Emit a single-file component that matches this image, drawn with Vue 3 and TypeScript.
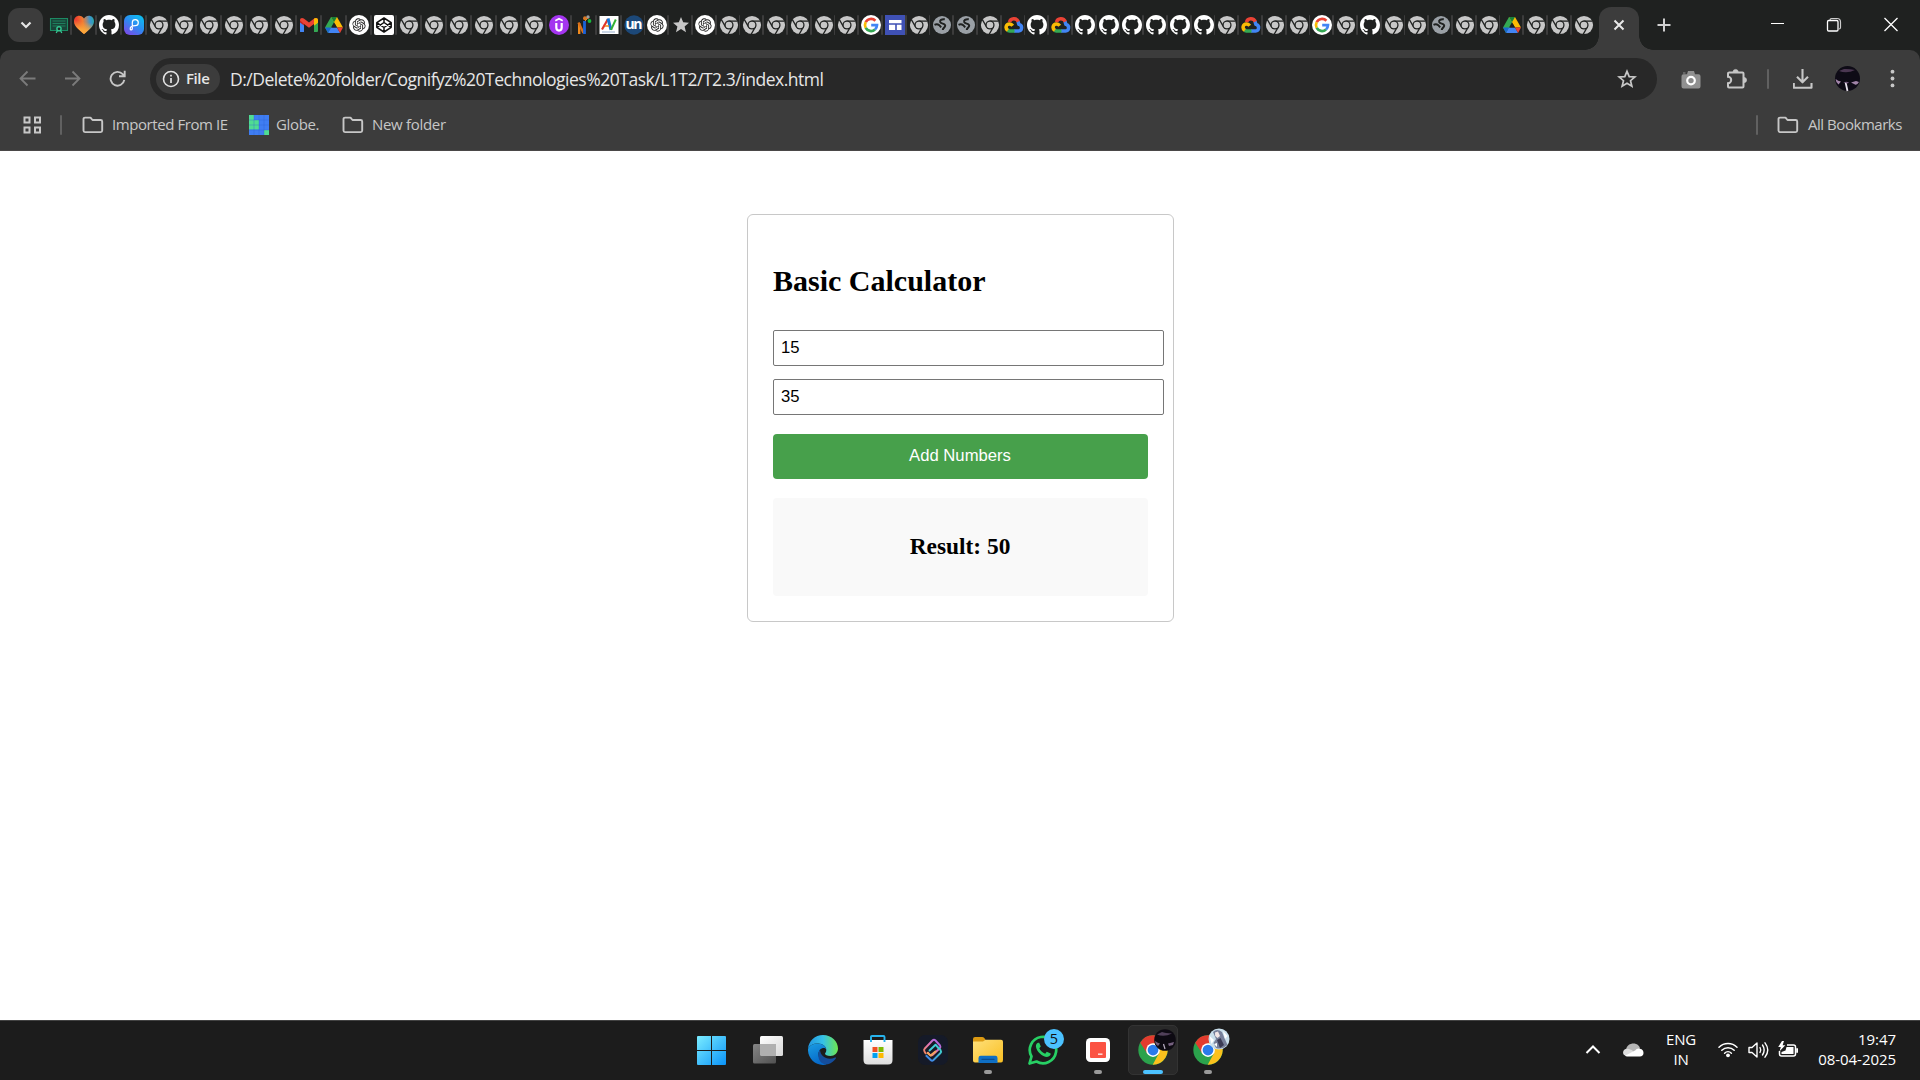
<script setup lang="ts">
import { computed, ref } from 'vue'

const favicons: string[] = [
  'cert', 'heart', 'github', 'play',
  ...Array(6).fill('chrome'),
  'gmail', 'drive', 'openai', 'codepen',
  ...Array(6).fill('chrome'),
  'udemy', 'nest', 'av', 'un', 'openai', 'star', 'openai',
  ...Array(6).fill('chrome'),
  'google', 'sites', 'chrome', 'globe', 'globe', 'chrome', 'gcloud', 'github', 'gcloud',
  ...Array(6).fill('github'),
  'chrome', 'gcloud', 'chrome', 'chrome', 'google', 'chrome', 'github', 'chrome', 'chrome', 'globe',
  'chrome', 'chrome', 'drive', 'chrome', 'chrome', 'chrome',
]

// Tabs shrink unevenly: the first 23 keep 25px, the rest share 23.75px on whole pixels.
const offset = (i: number): number => (i <= 23 ? i * 25 : 575 + Math.floor((i - 23) * 23.75))
const tabs = favicons.map((icon, i) => ({ icon, width: offset(i + 1) - offset(i) }))

const first = ref('15')
const second = ref('35')
const result = ref<number>(50)
const add = (): void => {
  result.value = Number(first.value) + Number(second.value)
}
const resultText = computed(() => `Result: ${result.value}`)
</script>

<template>
  <div class="screen">
    <svg class="sprite" width="0" height="0" aria-hidden="true">
      <defs>
        <linearGradient id="g-heart" x1="0" y1="0.2" x2="1" y2="0.1"><stop offset="0.1" stop-color="#ee4030" /><stop offset="0.42" stop-color="#f47a30" /><stop offset="0.62" stop-color="#9a8a80" /><stop offset="0.8" stop-color="#3a96cf" /><stop offset="1" stop-color="#2aa8a0" /></linearGradient>
        <linearGradient id="g-heart2" x1="0.6" y1="0.1" x2="0.4" y2="1"><stop offset="0.25" stop-color="#fba63a" stop-opacity="0" /><stop offset="0.75" stop-color="#fba63a" /></linearGradient>
        <linearGradient id="g-play" x1="0.9" y1="0" x2="0.2" y2="1"><stop offset="0" stop-color="#08c4ee" /><stop offset="0.5" stop-color="#2c8cf2" /><stop offset="1" stop-color="#7a4be8" /></linearGradient>
        <linearGradient id="g-win" x1="0" y1="0" x2="1" y2="1"><stop offset="0" stop-color="#7bedff" /><stop offset="1" stop-color="#0a93f8" /></linearGradient>
        <linearGradient id="g-tv" x1="0" y1="0" x2="1" y2="1"><stop offset="0" stop-color="#fff" /><stop offset="1" stop-color="#d8d8d8" /></linearGradient>
        <linearGradient id="g-tv2" x1="0" y1="0" x2="1" y2="1"><stop offset="0" stop-color="#858585" /><stop offset="1" stop-color="#515151" /></linearGradient>
        <linearGradient id="g-edge1" x1="0" y1="0.3" x2="1" y2="0.3"><stop offset="0" stop-color="#2196e0" /><stop offset="0.5" stop-color="#35c1e8" /><stop offset="1" stop-color="#6ee84e" /></linearGradient>
        <linearGradient id="g-edge2" x1="0" y1="0" x2="0.4" y2="1"><stop offset="0" stop-color="#1b9de2" /><stop offset="1" stop-color="#0669c9" /></linearGradient>
        <linearGradient id="g-folder" x1="0" y1="0" x2="1" y2="1"><stop offset="0" stop-color="#ffe07a" /><stop offset="1" stop-color="#f9bf22" /></linearGradient>
        <linearGradient id="g-store" x1="0" y1="0" x2="0" y2="1"><stop offset="0" stop-color="#fff" /><stop offset="1" stop-color="#dedede" /></linearGradient>
        <linearGradient id="g-clip1" x1="0" y1="1" x2="1" y2="0"><stop offset="0" stop-color="#f08b52" /><stop offset="0.5" stop-color="#e275b8" /><stop offset="1" stop-color="#9a63f0" /></linearGradient>
        <linearGradient id="g-clip2" x1="0" y1="1" x2="1" y2="0"><stop offset="0" stop-color="#3f78ee" /><stop offset="1" stop-color="#3fdcc8" /></linearGradient>

        <symbol id="f-chrome" viewBox="0 0 20 20">
          <circle cx="10" cy="10" r="9.1" fill="#c7c7c7" />
          <circle cx="10" cy="10" r="4.6" fill="#1f2120" />
          <g stroke="#1f2120" stroke-width="1.3"><path d="M9.5 6.1H18.5" /><path d="M9.5 6.1H18.5" transform="rotate(120 10 10)" /><path d="M9.5 6.1H18.5" transform="rotate(240 10 10)" /></g>
          <circle cx="10" cy="10" r="3.3" fill="#c7c7c7" />
        </symbol>
        <symbol id="f-github" viewBox="0 0 16 16">
          <path fill="#fff" d="M8 0C3.58 0 0 3.58 0 8c0 3.54 2.29 6.53 5.47 7.59.4.07.55-.17.55-.38 0-.19-.01-.82-.01-1.49-2.01.37-2.53-.49-2.69-.94-.09-.23-.48-.94-.82-1.13-.28-.15-.68-.52-.01-.53.63-.01 1.08.58 1.23.82.72 1.21 1.87.87 2.33.66.07-.52.28-.87.51-1.07-1.78-.2-3.64-.89-3.64-3.95 0-.87.31-1.59.82-2.15-.08-.2-.36-1.02.08-2.12 0 0 .67-.21 2.2.82.64-.18 1.32-.27 2-.27s1.36.09 2 .27c1.53-1.04 2.2-.82 2.2-.82.44 1.1.16 1.92.08 2.12.51.56.82 1.27.82 2.15 0 3.07-1.87 3.75-3.65 3.95.29.25.54.73.54 1.48 0 1.07-.01 1.93-.01 2.2 0 .21.15.46.55.38A8.01 8.01 0 0 0 16 8c0-4.42-3.58-8-8-8z" />
        </symbol>
        <symbol id="f-cert" viewBox="0 0 20 20">
          <path d="M1.500 3.500H18.500V15.500H1.500z" fill="#194438" stroke="#1d8a63" stroke-width="1.100" />
          <path d="M3.500 6H16.500M3.500 8.500H16.500M3.500 11H16.500" stroke="#1f8f68" stroke-width=".8" />
          <path d="M8.500 15.500 7.200 18M11.500 15.500 12.800 18" stroke="#35c994" stroke-width="1.300" /><circle cx="10" cy="13.800" r="2.100" fill="#1f2120" stroke="#35c994" stroke-width="1.400" />
        </symbol>
        <symbol id="f-heart" viewBox="0 0 20 20">
          <path d="M10 19C6 15.500 0 11.500 0 6.200 0 3 2.400.8 5.200.8 7.200.8 9 1.900 10 3.600 11 1.900 12.800.8 14.800.8 17.600.8 20 3 20 6.200 20 11.500 14 15.500 10 19z" fill="url(#g-heart)" />
          <path d="M10 19C6 15.500 0 11.500 0 6.200 0 3 2.400.8 5.200.8 7.200.8 9 1.900 10 3.600 11 1.900 12.800.8 14.800.8 17.600.8 20 3 20 6.200 20 11.500 14 15.500 10 19z" fill="url(#g-heart2)" />
        </symbol>
        <symbol id="f-play" viewBox="0 0 20 20">
          <rect width="20" height="20" rx="6" fill="url(#g-play)" /><path d="M8.300 9.500V7.600A3 3 0 1 1 11.300 10.700C8 10.700 6 12 6.200 14 6.400 15.500 8.300 15.200 8.300 13.500V9" fill="none" stroke="#fff" stroke-width="1.200" stroke-linecap="round" />
        </symbol>
        <symbol id="f-gmail" viewBox="0 0 20 20">
          <path d="M1 16.800V5H5V17H2A1 1 0 0 1 1 16.800z" fill="#4285f4" /><path d="M15 17V5h4v11a1 1 0 0 1-1 1z" fill="#34a853" /><path d="M1 5 5 6.500V10.600L1 7.600z" fill="#c5221f" /><path d="M19 5 15 6.500V10.600L19 7.600z" fill="#fbbc04" /><path d="M1 5.200C1 3 3.200 2.300 4.800 3.600L10 7.500 15.200 3.600C16.800 2.300 19 3 19 5.200L15 9 10 12.800 5 9z" fill="#ea4335" /><path d="M15.200 3.600C16.800 2.300 19 3 19 5.200V7.600L15 10.600V3.700z" fill="#fbbc04" />
        </symbol>
        <symbol id="f-drive" viewBox="0 0 20 20">
          <path d="M7 2H10L12.500 6.300 4 18 1 12.500z" fill="#34a853" /><path d="M7 2H13L19 12.500H13z" fill="#fbbc04" /><path d="M7 2H13L10 7.200z" fill="#188038" /><path d="M7 12.500H13L16 18H4z" fill="#4285f4" /><path d="M1 12.500H7L4 18z" fill="#1967d2" /><path d="M13 12.500H19L16 18z" fill="#ea4335" /><path d="M10 7.200 13 12.500H7z" fill="#1f2120" />
        </symbol>
        <symbol id="f-openai" viewBox="0 0 20 20">
          <circle cx="10" cy="10" r="10" fill="#fff" />
          <path transform="translate(3.300 3.300) scale(.558)" fill="#222" d="M22.2819 9.8211a5.9847 5.9847 0 0 0-.5157-4.9108 6.0462 6.0462 0 0 0-6.5098-2.9A6.0651 6.0651 0 0 0 4.9807 4.1818a5.9847 5.9847 0 0 0-3.9977 2.9 6.0462 6.0462 0 0 0 .7427 7.0966 5.98 5.98 0 0 0 .511 4.9107 6.051 6.051 0 0 0 6.5146 2.9001A5.9847 5.9847 0 0 0 13.2599 24a6.0557 6.0557 0 0 0 5.7718-4.2058 5.9894 5.9894 0 0 0 3.9977-2.9001 6.0557 6.0557 0 0 0-.7475-7.0729zm-9.022 12.6081a4.4755 4.4755 0 0 1-2.8764-1.0408l.1419-.0804 4.7783-2.7582a.7948.7948 0 0 0 .3927-.6813v-6.7369l2.02 1.1686a.071.071 0 0 1 .038.052v5.5826a4.504 4.504 0 0 1-4.4945 4.4944zm-9.6607-4.1254a4.4708 4.4708 0 0 1-.5346-3.0137l.142.0852 4.783 2.7582a.7712.7712 0 0 0 .7806 0l5.8428-3.3685v2.3324a.0804.0804 0 0 1-.0332.0615L9.74 19.9502a4.4992 4.4992 0 0 1-6.1408-1.6464zM2.3408 7.8956a4.485 4.485 0 0 1 2.3655-1.9728V11.6a.7664.7664 0 0 0 .3879.6765l5.8144 3.3543-2.0201 1.1685a.0757.0757 0 0 1-.071 0l-4.8303-2.7865A4.504 4.504 0 0 1 2.3408 7.872zm16.5963 3.8558L13.1038 8.364 15.1192 7.2a.0757.0757 0 0 1 .071 0l4.8303 2.7913a4.4944 4.4944 0 0 1-.6765 8.1042v-5.6772a.79.79 0 0 0-.407-.667zm2.0107-3.0231l-.142-.0852-4.7735-2.7818a.7759.7759 0 0 0-.7854 0L9.409 9.2297V6.8974a.0662.0662 0 0 1 .0284-.0615l4.8303-2.7866a4.4992 4.4992 0 0 1 6.6802 4.66zM8.3065 12.863l-2.02-1.1638a.0804.0804 0 0 1-.038-.0567V6.0742a4.4992 4.4992 0 0 1 7.3757-3.4537l-.142.0805L8.704 5.459a.7948.7948 0 0 0-.3927.6813zm1.0976-2.3654l2.602-1.4998 2.6069 1.4998v2.9994l-2.5974 1.4997-2.6067-1.4997Z" />
        </symbol>
        <symbol id="f-codepen" viewBox="0 0 20 20">
          <rect width="20" height="20" rx="2" fill="#fff" /><path d="M10 3 17.200 7.700V12.300L10 17 2.800 12.300V7.700zM10 3V7.500M10 12.500V17M2.800 7.700 10 12.500 17.200 7.700M2.800 12.300 10 7.500 17.200 12.300" fill="none" stroke="#111" stroke-width="1.500" stroke-linejoin="round" />
        </symbol>
        <symbol id="f-udemy" viewBox="0 0 20 20">
          <circle cx="10" cy="10" r="10" fill="#a435f0" /><path d="M6.300 5.800 10 3.700 13.700 5.800" fill="none" stroke="#fff" stroke-width="1.600" /><path d="M7.300 8V12.600C7.300 14.600 8.400 15.600 10 15.600S12.700 14.600 12.700 12.600V8" fill="none" stroke="#fff" stroke-width="2.200" />
        </symbol>
        <symbol id="f-nest" viewBox="0 0 20 20">
          <path d="M5.200 19V8" stroke="#f08a1d" stroke-width="2.400" /><path d="M4.500 7.500 9.500 18" stroke="#d9701a" stroke-width="2.400" /><path d="M10.500 19V6" stroke="#1b63d8" stroke-width="2.800" /><circle cx="11" cy="3.300" r="2" fill="#d97822" /><circle cx="14" cy="2" r="1.700" fill="#a0a0a0" /><circle cx="15.500" cy="6" r="1.900" fill="#18b83c" /><path d="M11 6 14 3" stroke="#e08a30" stroke-width="1" />
        </symbol>
        <symbol id="f-av" viewBox="0 0 20 20">
          <rect x=".5" y="1" width="19" height="18" fill="#fff" /><path d="M3 14.500 9 4" stroke="#e0352b" stroke-width="2.200" /><path d="M9 3.500 12 14.800" stroke="#1976d2" stroke-width="3" /><path d="M12 14.800 16.800 4.500" stroke="#34b233" stroke-width="2" /><path d="M6 11H10" stroke="#ef8c1a" stroke-width="1.500" /><path d="M3 17H16" stroke="#7b99c0" stroke-width=".8" />
        </symbol>
        <symbol id="f-un" viewBox="0 0 20 20">
          <circle cx="10" cy="10" r="9.700" fill="#1c4878" /><text x="10" y="13.500" text-anchor="middle" textLength="17" font-family="Open Sans, sans-serif" font-weight="700" font-size="14" fill="#fff">un</text>
        </symbol>
        <symbol id="f-star" viewBox="0 0 20 20"><path d="M10 2 12.200 7.300 18 7.700 13.600 11.500 15 17.200 10 14.100 5 17.200 6.400 11.500 2 7.700 7.800 7.300z" fill="#c7c7c7" /></symbol>
        <symbol id="f-google" viewBox="0 0 20 20">
          <circle cx="10" cy="10" r="10" fill="#fff" /><g fill="none" stroke-width="2.700"><path d="M14.400 5.800A6 6 0 0 0 4.700 7.200" stroke="#ea4335" /><path d="M4.700 7.200A6 6 0 0 0 4.700 12.800" stroke="#fbbc05" /><path d="M4.700 12.800A6 6 0 0 0 14 14.500" stroke="#34a853" /><path d="M10.200 10.200H16A6 6 0 0 1 14 14.500" stroke="#4285f4" /></g>
        </symbol>
        <symbol id="f-sites" viewBox="0 0 20 20"><rect width="20" height="20" fill="#3f51b5" /><path d="M4 5H16.500V8.200H4zM4 9.800H10.200V15H4zM11.800 9.800H16.500V15H11.800z" fill="#fff" /></symbol>
        <symbol id="f-globe" viewBox="0 0 20 20">
          <circle cx="10" cy="10" r="9" fill="#9aa0a6" />
          <path d="M12.800 4.300C9.500 3.800 7.500 5.500 8.300 7.200 9.300 9 13.300 8.300 13.200 10.800 13.100 12.800 10.800 12.500 10.800 15" fill="none" stroke="#1f2120" stroke-width="2" />
          <path d="M2.500 9.800C4.500 8.800 6 9.200 7.300 10.200L9.200 12.300" fill="none" stroke="#1f2120" stroke-width="2" />
        </symbol>
        <symbol id="f-gcloud" viewBox="0 0 20 20">
          <g fill="none" stroke-width="3.500"><path d="M5.500 7.200C6.500 3 12.500 2.400 14.500 7" stroke="#ea4335" /><path d="M14 6.700C14.600 8 14.500 8.500 15 9.400 19 10.500 18 16 14.500 15.900H10" stroke="#4285f4" /><path d="M10.500 15.900H5.500L3.300 15.300" stroke="#34a853" /><path d="M3.800 15.300C.7 13 2.200 8.800 5.500 8.900 7 9 8 9.700 8.700 10.700" stroke="#fbbc05" /></g>
        </symbol>

        <symbol id="i-folder" viewBox="0 0 22 18"><path d="M1.500 3.700V14.600A1.500 1.500 0 0 0 3 16.100H18.700A1.500 1.500 0 0 0 20.200 14.600V5.500A1.500 1.500 0 0 0 18.700 4H10.500L8.500 1.600H3A1.500 1.500 0 0 0 1.500 3.100z" fill="none" stroke="#c7c7c7" stroke-width="1.900" stroke-linejoin="round" /></symbol>
        <symbol id="i-chrome" viewBox="0 0 48 48">
          <circle cx="24" cy="24" r="23.500" fill="#2ba24c" />
          <path d="M3.650 12.250 14.800 29.400 24 13.300H44.900A23.500 23.500 0 0 0 3.650 12.250z" fill="#e33b2e" />
          <path d="M24 13.300H44.900A23.500 23.500 0 0 1 23.500 47.500L33.300 29.400z" fill="#fbc11d" />
          <circle cx="24" cy="24" r="11" fill="#fff" /><circle cx="24" cy="24" r="8.600" fill="#2a7bea" />
        </symbol>
      </defs>
    </svg>

    <header class="titlebar">
      <button class="tab-search" aria-label="Search tabs">
        <svg width="12" height="8" viewBox="0 0 12 8"><path d="M1.500 1.500 6 6 10.500 1.500" fill="none" stroke="#e6e6e6" stroke-width="2.200" /></svg>
      </button>
      <div class="tabs">
        <div v-for="(tab, i) in tabs" :key="i" class="tab" :style="{ width: tab.width + 'px' }">
          <svg width="20" height="20"><use :href="'#f-' + tab.icon" /></svg>
          <span v-if="i < tabs.length - 1" class="tab-sep"></span>
        </div>
      </div>
      <div class="tab-active">
        <svg width="12" height="12" viewBox="0 0 12 12"><path d="M1.500 1.500 10.500 10.500M10.500 1.500 1.500 10.500" stroke="#e8e8e8" stroke-width="2" /></svg>
      </div>
      <svg class="new-tab" width="14" height="14" viewBox="0 0 14 14"><path d="M7 .5V13.500M.5 7H13.500" stroke="#d0d0d0" stroke-width="2" /></svg>
      <div class="window-controls">
        <svg width="57" height="20" viewBox="0 0 57 20"><path d="M23 8.500H36" stroke="#fff" stroke-width="1" /></svg>
        <svg width="57" height="20" viewBox="0 0 57 20"><path d="M25 5.500V5Q25 3.500 26.500 3.500H32Q35.500 3.500 35.500 7V12.500Q35.500 14 34 14" fill="none" stroke="#ccc" stroke-width="1.200" /><rect x="22.500" y="5.500" width="10.500" height="10.500" rx="1.200" fill="none" stroke="#fff" stroke-width="1.300" /></svg>
        <svg width="57" height="20" viewBox="0 0 57 20"><path d="M22.500 3 35.500 16M35.500 3 22.500 16" stroke="#fff" stroke-width="1.300" /></svg>
      </div>
    </header>

    <section class="chrome-bars">
      <div class="toolbar">
        <div class="tool"><svg width="18" height="18" viewBox="0 0 18 18"><path d="M16.500 8.500H2M8.500 1.500 1.500 8.500 8.500 15.500" fill="none" stroke="#7b7b7b" stroke-width="1.800" /></svg></div>
        <div class="tool"><svg width="18" height="18" viewBox="0 0 18 18"><path d="M1 8.500H15M8.500 1.500 15.500 8.500 8.500 15.500" fill="none" stroke="#7b7b7b" stroke-width="1.800" /></svg></div>
        <div class="tool"><svg width="18" height="18" viewBox="0 0 18 18"><path d="M15.300 9.900A6.900 6.900 0 1 1 13.700 4.200L15.500 6M15.700 .8V6.300H10" fill="none" stroke="#c7c7c7" stroke-width="1.900" /></svg></div>
        <div class="omnibox">
          <div class="chip">
            <svg width="18" height="18" viewBox="0 0 18 18"><circle cx="9" cy="9" r="7.500" fill="none" stroke="#e3e3e3" stroke-width="1.600" /><path d="M9 8V13M9 4.800V6.600" stroke="#e3e3e3" stroke-width="1.700" /></svg>
            <span>File</span>
          </div>
          <span class="url">D:/Delete%20folder/Cognifyz%20Technologies%20Task/L1T2/T2.3/index.html</span>
          <svg class="bookmark" width="20" height="20" viewBox="0 0 20 20"><path d="M10 2.300 12.200 7.600 17.900 8 13.500 11.700 14.900 17.300 10 14.300 5.100 17.300 6.500 11.700 2.100 8 7.800 7.600z" fill="none" stroke="#c7c7c7" stroke-width="1.700" /></svg>
        </div>
        <div class="tool tool-camera"><svg width="20" height="18" viewBox="0 0 20 18"><path d="M7 0H13L14 3.200H17.500A2 2 0 0 1 19.500 5.200V15.500A2 2 0 0 1 17.500 17.500H2.500A2 2 0 0 1 .5 15.500V5.200A2 2 0 0 1 2.500 3.200H6z" fill="#919191" /><path d="M2 2H4.500" stroke="#919191" /><circle cx="10" cy="9.600" r="3.800" fill="#8a8a8a" stroke="#fff" stroke-width="2.200" /></svg></div>
        <div class="tool"><svg width="22" height="22" viewBox="0 0 22 22"><path d="M3.500 4.500H17.500Q18.500 4.500 18.500 5.500V18.500Q18.500 19.500 17.500 19.500H4Q3 19.500 3 18.500V15.200A3.200 3.200 0 0 0 3 8.800V5.500Q3 4.500 4 4.500" fill="none" stroke="#c7c7c7" stroke-width="2" /><path d="M8 4A2.600 2.600 0 0 1 13.200 4zM19 9.400A2.600 2.600 0 0 1 19 14.600z" fill="#c7c7c7" stroke="#c7c7c7" stroke-width=".6" /></svg></div>
        <span class="rule tool-rule"></span>
        <div class="tool"><svg width="20" height="20" viewBox="0 0 20 20"><path d="M9.500 0V13M4 7.800 9.500 13.300 15 7.800M.8 14V18.800H18.500V14" fill="none" stroke="#c7c7c7" stroke-width="2.100" stroke-linejoin="round" /></svg></div>
        <div class="tool">
          <svg width="26" height="26" viewBox="0 0 26 26"><circle cx="12.500" cy="12.500" r="12.500" fill="#0e0b16" /><path d="M4 5Q12 8 20 4Q13 2.500 9 3z" fill="#4b3752" /><path d="M.6 13Q3 15 6 15.500L3.500 18.500Q.6 16 .6 13zM16 16.500 21 15 24 16Q22 19.500 20 18.500z" fill="#a184a8" /><path d="M10.500 16 12.500 25" stroke="#e9e2ee" stroke-width="1.800" /><path d="M8 16 14 16 12.500 17.500z" fill="#73577c" /></svg>
        </div>
        <div class="tool"><svg width="6" height="20" viewBox="0 0 6 20"><g fill="#c7c7c7"><circle cx="2.500" cy="2.700" r="1.900" /><circle cx="2.500" cy="9.500" r="1.900" /><circle cx="2.500" cy="16.400" r="1.900" /></g></svg></div>
      </div>

      <nav class="bookmarks">
        <svg class="apps" width="20" height="20" viewBox="0 0 20 20"><path d="M1.500 2.500H6.500V7.500H1.500zM12 2.500H17V7.500H12zM1.500 12.500H6.500V17.500H1.500zM12 12.500H17V17.500H12z" fill="none" stroke="#c7c7c7" stroke-width="2" /></svg>
        <span class="rule"></span>
        <div class="mark mark-ie"><svg width="22" height="18"><use href="#i-folder" /></svg><span class="t-ie">Imported From IE</span></div>
        <div class="mark mark-globe">
          <svg width="20" height="20" viewBox="0 0 20 20"><rect width="20" height="20" fill="#3f7df2" /><path d="M0 0H5V5H10V14.500H0zM15 15H20V20H15z" fill="#4fdd93" /><path d="M5 0V20M10 0V20M15 0V20M0 5H20M0 10H20M0 15H20" stroke="#2d62d0" stroke-opacity=".45" stroke-width=".8" /></svg>
          <span class="t-globe">Globe.</span>
        </div>
        <div class="mark mark-new"><svg width="22" height="18"><use href="#i-folder" /></svg><span class="t-new">New folder</span></div>
        <span class="rule rule-right"></span>
        <div class="mark mark-all"><svg width="22" height="18"><use href="#i-folder" /></svg><span class="t-all">All Bookmarks</span></div>
      </nav>
    </section>

    <main class="page">
      <div class="calculator">
        <h2>Basic Calculator</h2>
        <input v-model="first" type="text" />
        <input v-model="second" type="text" />
        <button class="add" @click="add">Add Numbers</button>
        <div class="result"><h3>{{ resultText }}</h3></div>
      </div>
    </main>

    <footer class="taskbar">
      <div class="apps-row">
        <div class="app app-start"><svg width="29" height="29" viewBox="0 0 29 29"><path d="M1 0H14V14H0V1Q0 0 1 0zM15 0H28Q29 0 29 1V14H15zM0 15H14V29H1Q0 29 0 28zM15 15H29V28Q29 29 28 29H15z" fill="url(#g-win)" /></svg></div>
        <div class="app"><svg width="30" height="30" viewBox="0 0 30 30"><rect x="7" y="1" width="23" height="20" rx="1.500" fill="url(#g-tv)" /><rect x="0" y="9" width="23" height="19.500" rx="1.500" fill="url(#g-tv2)" /><path d="M7 9H23V21H8.500Q7 21 7 19.500z" fill="#b0b0b0" /></svg></div>
        <div class="app">
          <svg width="30" height="30" viewBox="0 0 30 30"><path d="M0 14C.5 6 7 0 15 0 24 0 30 6.500 30 13.500 30 18 26.500 21 22.500 21 19 21 17 19.800 17 18.700 17 18 18.300 17.500 18.300 15 18.300 11.500 15 8.500 10 8.500 5 8.500 1.500 10.500 0 14z" fill="url(#g-edge1)" /><path d="M0 14C2 10 5.500 8.500 9.500 8.500 14.500 8.500 18.300 11.300 18.300 14.500 16.500 11.500 10.500 13.500 10.500 19 10.500 24.500 14.500 28.500 19 29.400 8.500 32 -.5 24 0 14z" fill="url(#g-edge2)" /><path d="M12 14.700C9.500 17 8.500 29.800 20 29.300 23.500 28.300 26.500 25.800 28 23.300 28.400 22.500 27.700 22.200 27 22.500 20 25.800 12.500 22 12 14.700z" fill="#144d9c" /></svg>
        </div>
        <div class="app"><svg width="30" height="30" viewBox="0 0 30 30"><path d="M8 6V2Q8 1 9 1H20.500Q21.500 1 21.500 2V6" fill="none" stroke="#27b4ee" stroke-width="1.900" /><path d="M.5 5H29.500V25Q29.500 29.500 25 29.500H5Q.5 29.500 .5 25z" fill="url(#g-store)" /><path d="M8 5V7M21.500 5V7" stroke="#27b4ee" stroke-width="1.900" /><path d="M9.500 12H14.500V17H9.500z" fill="#f05022" /><path d="M15.500 12H20.500V17H15.500z" fill="#7fba00" /><path d="M9.500 18H14.500V23H9.500z" fill="#00a1f1" /><path d="M15.500 18H20.500V23H15.500z" fill="#fdb900" /></svg></div>
        <div class="app"><svg width="30" height="30" viewBox="0 0 30 30"><rect width="30" height="30" rx="7" fill="#151a28" /><g fill="none" stroke-width="1.900" stroke-linejoin="round"><path d="M8 19 6.500 16.500Q5.500 14.800 6.800 13.500L14.500 5.500Q16 4 17.500 5.500L22 10.500Q23 12 21.800 13.300L14.500 20Q13.300 21 12 20L9.500 17" stroke="url(#g-clip1)" /><path d="M19.500 12.300 22.500 15Q23.600 16.500 22.500 18L15.500 25Q14 26.300 12.700 25L7.800 20.300" stroke="url(#g-clip2)" /><path d="M11 16 17.500 9.700 20 12.500" stroke="#40cfd8" /><path d="M9 17.500 12.500 20.500 18 16" stroke="#f4a560" /></g></svg></div>
        <div class="app">
          <svg width="30" height="28" viewBox="0 0 30 28"><path d="M0 3Q0 1 2 1H9Q10.500 1 11.500 2.300L13 4.500H20V10H0z" fill="#dc9a12" /><path d="M0 5.500H10L12.500 3.800H28Q30 3.800 30 5.800V24Q30 26.500 28 26.500H2Q0 26.500 0 24.500z" fill="url(#g-folder)" /><path d="M5.500 27V22Q5.500 19.800 7.700 19.800H22.300Q24.500 19.800 24.500 22V27z" fill="#0f6fc4" /><path d="M9 23.300H21" stroke="#0a4d91" stroke-width="1.300" stroke-linecap="round" /></svg>
          <span class="dot"></span>
        </div>
        <div class="app">
          <svg width="30" height="30" viewBox="0 0 30 30"><path d="M1.500 28.500 3.500 21.500A13.200 13.200 0 1 1 8.500 26.500z" fill="none" stroke="#27d064" stroke-width="2.700" stroke-linejoin="round" /><path d="M10.500 7.700C9.200 7.700 7.700 9.200 7.900 11.600 8.300 16.500 14.500 22 19 22 21.300 22 22.900 20.300 22.700 18.600L18.800 16.700 17.200 18.700C14.500 17.800 12.300 15.700 11.300 13.300L12.800 11.500 11.200 7.700z" fill="#27d064" /></svg>
          <span class="badge">5</span>
        </div>
        <div class="app">
          <svg width="26" height="26" viewBox="0 0 26 26"><rect x="1" y="1" width="24" height="24" rx="4.500" fill="#fff" /><rect x="5" y="5" width="16" height="16" rx="1" fill="#fb5343" /><path d="M13 17.200H17.500" stroke="#ffd7d2" stroke-width="1.600" /></svg>
          <span class="dot"></span>
        </div>
        <div class="app app-current">
          <svg width="30" height="30"><use href="#i-chrome" /></svg>
          <svg class="profile" width="22" height="22" viewBox="0 0 22 22"><circle cx="11" cy="11" r="10.800" fill="#0d0a12" /><path d="M3 5.500Q10 8.500 18 4.500Q11 4 8 3z" fill="#51405a" /><path d="M1 12Q4 14 6 14.500L4 17Q1 15 1 12zM14 14.500 20 13 19 16 15 17z" fill="#75607f" /><path d="M9.500 15 11 20" stroke="#b8adc2" stroke-width="1.200" /></svg>
          <span class="dot dot-current"></span>
        </div>
        <div class="app">
          <svg width="30" height="30"><use href="#i-chrome" /></svg>
          <svg class="profile" width="22" height="22" viewBox="0 0 22 22"><circle cx="11" cy="11" r="10.500" fill="#c9dfeb" /><path d="M5 4Q9 0 14 4L16 9 19.500 17Q14 22 8 20L5.500 15 8 11z" fill="#77809a" /><path d="M7 4.500 10 3.500 12 8 9.500 10 7.200 8z" fill="#f2e6e6" /><path d="M9 12 12.500 10 16 17 12 20z" fill="#3a3b55" /><path d="M1.500 8 6 12 3.500 16zM15 3 19.500 8 17 11zM6 16 9 15 9 19z" fill="#fff" /></svg>
          <span class="dot"></span>
        </div>
      </div>

      <div class="tray">
        <svg class="chevron" width="16" height="10" viewBox="0 0 16 10"><path d="M1.500 8 8 1.500 14.500 8" fill="none" stroke="#fff" stroke-width="2" /></svg>
        <svg class="cloud" width="21" height="14" viewBox="0 0 21 14"><path d="M3 7C3.500 2.500 7 .5 10.500.5 14 .5 16.500 2.800 17 5.500L10 9z" fill="#b5b5b5" /><path d="M0 10C0 7 2 5.800 4 5.800 6 5.500 8 6.500 10 8L14 11 3 13Q0 12 0 10z" fill="#dedede" /><path d="M2 12.800 12 7.500Q14 5 17 5.800C19.500 6.300 20.500 8 20.500 10 20.500 12 19 13.500 17 13.500H4Q3 13.500 2 12.800z" fill="#fff" /></svg>
        <div class="lang"><span>ENG</span><span>IN</span></div>
        <svg class="wifi" width="20" height="16" viewBox="0 0 20 16"><g fill="none" stroke="#fff" stroke-width="1.500" stroke-linecap="round"><path d="M1 5.300A12.800 12.800 0 0 1 19 5.300" /><path d="M3.800 8.300A8.800 8.800 0 0 1 16.200 8.300" /><path d="M6.600 11.200A4.900 4.900 0 0 1 13.400 11.200" /></g><circle cx="10" cy="13.300" r="1.900" fill="#fff" /></svg>
        <svg class="speaker" width="21" height="18" viewBox="0 0 21 18"><g fill="none" stroke="#fff" stroke-width="1.400" stroke-linejoin="round" stroke-linecap="round"><path d="M1 6.500H4L9 2V16L4 11.500H1z" /><path d="M12 6.500Q13.500 9 12 11.500" /><path d="M14.500 4Q17.800 9 14.500 14" /><path d="M17 1.800Q22.500 9 17 16.200" /></g></svg>
        <svg class="battery" width="21" height="18" viewBox="0 0 21 18"><path d="M9 4H15.500Q17.500 4 17.500 6V13Q17.500 15 15.500 15H3.500Q1.500 15 1.500 13V10" fill="none" stroke="#fff" stroke-width="1.500" /><path d="M8.500 6H15.500V13H3.500V11L7.500 9.500z" fill="#fff" /><path d="M18.200 7.300H20V11.700H18.200z" fill="#fff" /><path d="M4 0 .2 6H2.800L1.600 10.300 7.300 4.200H4.600L6 0z" fill="#fff" /></svg>
        <div class="clock"><span class="time">19:47</span><span class="date">08-04-2025</span></div>
      </div>
    </footer>
  </div>
</template>

<style>
body { margin: 0; overflow: hidden; }
</style>

<style scoped>
.screen {
  width: 1920px;
  height: 1080px;
  display: flex;
  flex-direction: column;
  overflow: hidden;
  background: #fff;
  font-family: "Open Sans", "Noto Sans", sans-serif;
}
.screen * { box-sizing: border-box; }
svg { display: block; flex: none; }
.sprite { position: absolute; }
button { padding: 0; border: 0; }
span { white-space: nowrap; }

.titlebar { height: 50px; display: flex; background: #1f2120; flex: none; }
.tab-search {
  width: 35px; height: 34px; margin: 8px 4px 0 8px; border-radius: 11px;
  background: #3c3c3c; display: flex; align-items: center; justify-content: center;
}
.tabs { display: flex; height: 50px; }
.tab { display: flex; align-items: center; justify-content: space-between; padding-left: 2px; height: 50px; }
.tab-sep { width: 2px; height: 20px; background: #3c3c3c; border-radius: 1px; }
.tab-active {
  position: relative; width: 40px; height: 43px; margin: 7px 0 0 4px; background: #3c3c3c;
  border-radius: 12px 12px 0 0; display: flex; justify-content: center; padding-top: 12px;
}
.tab-active::before, .tab-active::after { content: ""; position: absolute; bottom: 0; width: 14px; height: 14px; }
.tab-active::before { left: -14px; background: radial-gradient(circle at 0 0, transparent 13.5px, #3c3c3c 14px); }
.tab-active::after { right: -14px; background: radial-gradient(circle at 100% 0, transparent 13.5px, #3c3c3c 14px); }
.new-tab { margin: 18px 0 0 18px; }
.window-controls { margin-left: auto; display: flex; padding: 15px 1px 0 0; }

.chrome-bars { height: 101px; padding-top: 8px; background: #3c3c3c; border-bottom: 1px solid #4a4747; flex: none; position: relative; }
.chrome-bars::before { content: ""; position: absolute; inset: 0 0 auto; height: 12px; background: #1f2120; }
.chrome-bars::after { content: ""; position: absolute; inset: 0 0 auto; height: 12px; background: #3c3c3c; border-radius: 10px 10px 0 0; }
.toolbar { position: relative; z-index: 1; display: flex; align-items: center; height: 42px; padding-left: 5px; }
.tool { width: 45px; height: 42px; display: flex; align-items: center; justify-content: center; flex: none; }
.tool-camera { padding-top: 2px; }
.omnibox { width: 1507px; height: 42px; margin: 0 11px 0 10px; border-radius: 21px; background: #282828; display: flex; align-items: center; flex: none; padding-left: 6px; }
.chip { width: 64px; height: 30px; border-radius: 15px; background: #3c3c3c; display: flex; align-items: center; padding-left: 6px; }
.chip span { margin: -2px 0 0 6px; color: #e6e6e6; font-size: 15px; font-weight: 600; letter-spacing: -0.4px; }
.url { margin-left: 10px; color: #e6e6e6; font-size: 17.5px; letter-spacing: -0.48px; }
.bookmark { margin: 0 20px 0 auto; }
.rule { width: 2px; height: 20px; border-radius: 1px; background: #616161; flex: none; }
.tool-rule { margin: 0 11px 0 9px; }

.bookmarks { display: flex; align-items: center; height: 50px; padding-right: 17px; color: #c7c7c7; font-size: 15px; }
.apps { margin: 0 17px 0 23px; }
.mark { display: flex; align-items: center; }
.mark-ie { margin-left: 20px; }
.mark-globe { margin-left: 21px; }
.mark-new { margin-left: 23px; }
.mark span { margin: -2px 0 0 8px; }
.mark .t-globe { margin-left: 7px; }
.rule-right { margin-left: auto; }
.mark-all { margin-left: 19px; }
.mark .t-all { margin-left: 9px; }
.t-ie { width: 116px; letter-spacing: -0.43px; }
.t-globe { width: 43px; letter-spacing: -0.35px; }
.t-new { width: 73px; letter-spacing: -0.3px; }
.t-all { width: 95px; letter-spacing: -0.46px; }

.page { flex: 1; display: flex; justify-content: center; align-items: flex-start; background: #fff; }
.calculator {
  width: 427px; height: 408px; margin: 63px 0 0 1px; padding: 25px; border: 1px solid #c8c8c8; border-radius: 6px;
  font-family: "Liberation Serif", serif; color: #000; display: flex; flex-direction: column; align-items: flex-start;
}
h2 { margin: 24px 0 32px; font-size: 30px; line-height: 34px; font-weight: 700; }
input {
  width: 391px; height: 36px; margin: 0 0 13px; padding: 0 7px; border: 1px solid #767676; border-radius: 2px;
  font: 16.67px "Liberation Sans", sans-serif; color: #000; flex: none;
}
.add {
  width: 375px; height: 45px; margin-top: 6px; padding: 0 1px 2px 0; border-radius: 4px; background: #47a04b; color: #fff;
  font: 16.67px "Liberation Sans", sans-serif; flex: none;
}
.result { width: 375px; height: 98px; margin-top: 19px; padding: 0 1px 2px 0; border-radius: 4px; background: #f9f9f9; display: flex; align-items: center; justify-content: center; flex: none; }
h3 { margin: 0; font-size: 23.4px; line-height: 26px; font-weight: 700; }

.taskbar { height: 60px; background: #1c1c1c; border-top: 1px solid #424242; flex: none; display: flex; justify-content: space-between; }
.apps-row { display: flex; gap: 5px; padding: 4px 0 0 688px; }
.app { position: relative; width: 50px; height: 50px; border-radius: 5px; display: flex; align-items: center; justify-content: center; }
.app-start { padding-right: 3px; }
.app-current { background: #292929; border: 1px solid #333; }
.dot { position: absolute; left: 21px; bottom: 1px; width: 8px; height: 4px; border-radius: 2px; background: #9a9a9a; }
.app-current .dot-current { left: 14px; bottom: 0; width: 20px; background: #4cc2ff; }
.badge { position: absolute; left: 26px; top: 4px; width: 20px; height: 20px; border-radius: 10px; background: #4cc2ff; color: #111; font-size: 14.5px; line-height: 20px; text-align: center; }
.profile { position: absolute; left: 25px; top: 3px; }

.tray { display: flex; align-items: center; padding-right: 24px; color: #fff; height: 58px; }
.cloud { margin-left: 22px; }
.lang { width: 30px; margin: -2px 0 0 22px; display: flex; flex-direction: column; align-items: center; font-size: 15px; line-height: 20px; letter-spacing: -0.2px; }
.wifi { margin-left: 22px; }
.speaker { margin-left: 10px; }
.battery { margin-left: 9px; }
.clock { width: 78px; margin: -2px 0 0 19px; display: flex; flex-direction: column; align-items: flex-end; font-size: 15px; line-height: 20px; letter-spacing: -0.05px; }
</style>
